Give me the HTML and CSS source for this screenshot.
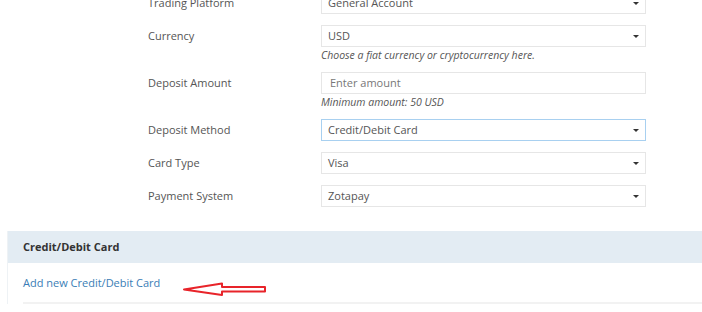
FILE: index.html
```html
<!DOCTYPE html>
<html lang="en">
<head>
    <meta charset="UTF-8">
    <title>Deposit</title>
    <link rel="stylesheet" href="styles.css">
</head>
<body>
    <div class="form">
        <div class="row">
            <div class="label">Trading Platform</div>
            <div class="field">
                <div class="select">General Account<span class="caret"></span></div>
            </div>
        </div>
        <div class="row">
            <div class="label">Currency</div>
            <div class="field">
                <div class="select">USD<span class="caret"></span></div>
                <div class="help">Choose a fiat currency or cryptocurrency here.</div>
            </div>
        </div>
        <div class="row">
            <div class="label">Deposit Amount</div>
            <div class="field">
                <div class="input placeholder">Enter amount</div>
                <div class="help">Minimum amount: 50 USD</div>
            </div>
        </div>
        <div class="row">
            <div class="label">Deposit Method</div>
            <div class="field">
                <div class="select focused">Credit/Debit Card<span class="caret"></span></div>
            </div>
        </div>
        <div class="row">
            <div class="label">Card Type</div>
            <div class="field">
                <div class="select">Visa<span class="caret"></span></div>
            </div>
        </div>
        <div class="row">
            <div class="label">Payment System</div>
            <div class="field">
                <div class="select">Zotapay<span class="caret"></span></div>
            </div>
        </div>
    </div>

    <div class="panel">
        <div class="panel-heading">Credit/Debit Card</div>
        <div class="panel-body">
            <div class="card-line">
                <a class="add-link" href="#">Add new Credit/Debit Card</a>
                <svg class="arrow" width="90" height="16" viewBox="0 0 90 16">
                    <path d="M2 8.5 L40 2.5 L40 6 L83 6 L83 10.5 L40 10.5 L40 14 Z" fill="#fff" stroke="#e8242a" stroke-width="2" stroke-linejoin="round"/>
                </svg>
            </div>
        </div>
    </div>
</body>
</html>
```

FILE: styles.css
```css
body {
    margin: 0;
    padding: 0;
    background-color: white;
    font-family: "Open Sans", Arial, sans-serif;
    color: #555;
    overflow: hidden;
}

.form {
    margin-top: -8px;
    margin-left: 148px;
    display: flex;
    flex-direction: column;
    gap: 11px;
}

.row {
    display: grid;
    grid-template-columns: 173px 325px;
    align-items: start;
}

.label {
    height: 22px;
    line-height: 22px;
    font-size: 11px;
    color: #555;
}

.select,
.input {
    position: relative;
    box-sizing: border-box;
    height: 22px;
    line-height: 20px;
    padding: 0 6px;
    border: 1px solid #e6e6e6;
    font-size: 11px;
    color: #555;
    background-color: white;
}

.select.focused {
    border-color: #a8d0f0;
}

.input.placeholder {
    padding-left: 8px;
    color: #777;
}

.caret {
    position: absolute;
    right: 6px;
    top: 9px;
    width: 0;
    height: 0;
    border-left: 3px solid transparent;
    border-right: 3px solid transparent;
    border-top: 3px solid #333;
}

.help {
    box-sizing: border-box;
    height: 14px;
    padding-top: 1px;
    line-height: 15px;
    font-size: 10.5px;
    font-style: italic;
    color: #555;
}

.panel {
    margin: 24px 0 0 7px;
    border-left: 1px solid #eef2f5;
}

.panel-heading {
    height: 32px;
    line-height: 32px;
    padding-left: 15px;
    background-color: #e3ecf3;
    font-size: 11px;
    font-weight: bold;
    color: #333;
}

.panel-body {
    padding: 12px 0 0 15px;
}

.card-line {
    display: flex;
    align-items: flex-start;
    height: 27px;
    border-bottom: 2px solid #f2f2f2;
    gap: 22px;
}

.add-link {
    line-height: 16px;
    font-size: 11px;
    color: #3a7db6;
    text-decoration: none;
}

.arrow {
    margin-top: 6px;
}
```
